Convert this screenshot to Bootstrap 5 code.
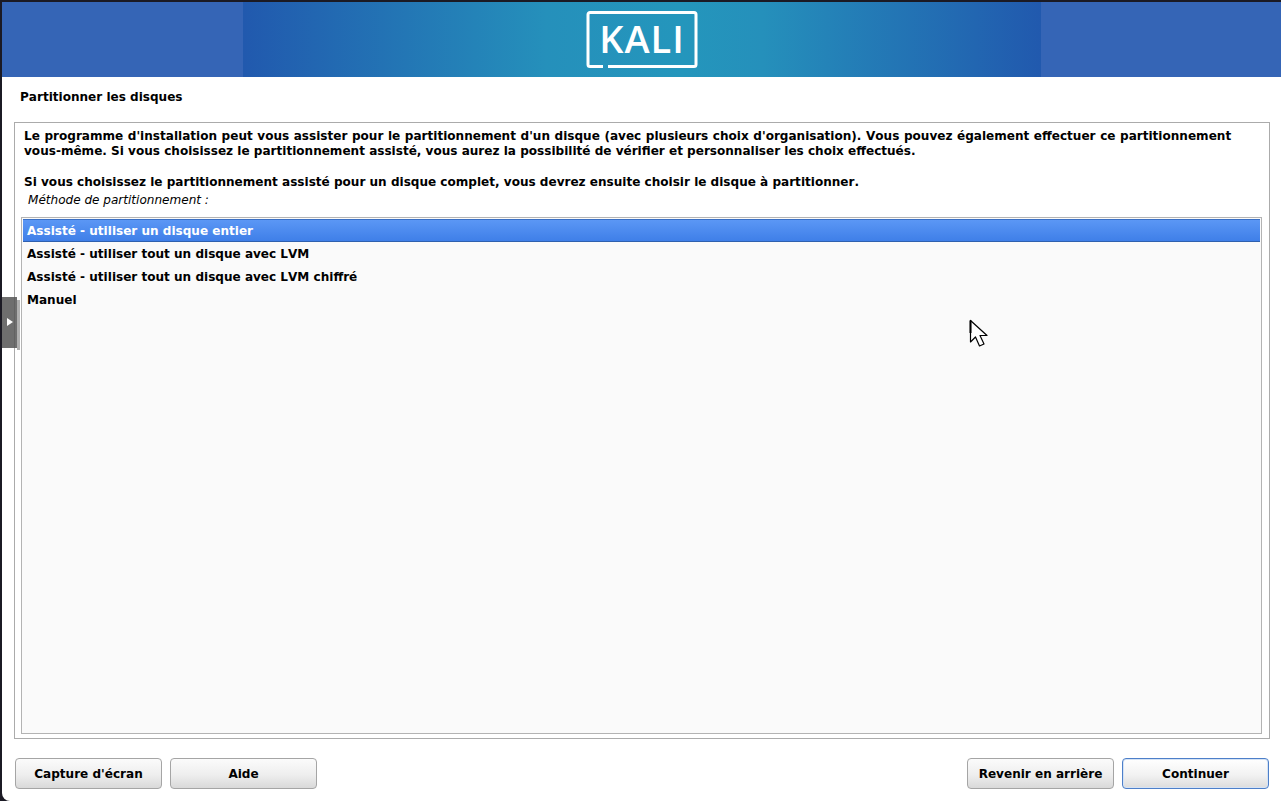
<!DOCTYPE html>
<html lang="fr">
<head>
    <meta charset="UTF-8">
    <meta name="viewport" content="width=device-width, initial-scale=1.0">
    <title>Partitionner les disques</title>
    <link href="https://cdn.jsdelivr.net/npm/bootstrap@5.3.2/dist/css/bootstrap.min.css" rel="stylesheet">
    <style>
        html, body {
            height: 801px;
            overflow: hidden;
            background-color: #1b1a24;
        }
        body {
            font-family: "DejaVu Sans", sans-serif;
            font-size: 12.05px;
            font-kerning: none;
            line-height: 15px;
            font-weight: 700;
            color: #000;
            padding: 2px 0 0 2px;
        }
        .inst-win {
            height: 799px;
            background-color: #fff;
            border-bottom-left-radius: 8px;
            position: relative;
        }
        .inst-banner {
            height: 75px;
            background-color: #3565b6;
        }
        .inst-banner-mid {
            width: 798px;
            margin-left: 241px;
            background: linear-gradient(90deg, #2159ae 0%, #2590bb 38%, #2496bc 55%, #2590bb 65%, #2159ae 100%);
        }
        .inst-title {
            padding: 13px 0 0 18px;
            height: 45px;
        }
        .inst-frame {
            margin: 0 11px 0 12px;
            height: 617px;
            border: 1px solid #ababab;
            padding: 6px 7px 4px 6px;
        }
        .inst-desc {
            padding: 0 0 0 3px;
            line-height: 15px;
            margin: 0;
        }
        .inst-wide {
            word-spacing: .38px;
        }
        .inst-label {
            font-weight: 400;
            font-style: italic;
            padding: 3px 0 0 7px;
            height: 27px;
        }
        .inst-list {
            height: 517px;
            border: 1px solid #b3b3b3;
            background-color: #fafafa;
            padding: 1px;
        }
        .inst-row {
            height: 23px;
            line-height: 24px;
            padding-left: 4px;
        }
        .inst-row-sel {
            color: #fff;
            background: linear-gradient(180deg, #5b97f5 0%, #3f7fe8 100%);
            border-top: 1px solid #3a6fc4;
            border-bottom: 1px solid #2f60ae;
            line-height: 23px;
        }
        .inst-foot {
            padding: 19px 12px 0 13px;
        }
        .inst-btn {
            width: 147px;
            height: 31px;
            padding: 1px 0 0;
            font-family: inherit;
            font-size: 12.05px;
            font-kerning: none;
            font-weight: 700;
            color: #000;
            border: 1px solid #a5a5a5;
            border-radius: 4px;
            background: linear-gradient(180deg, #fbfbfb 0%, #eeeeee 55%, #d9d9d9 100%);
        }
        .inst-btn-main {
            border: 1px solid #4d7fc9;
            box-shadow: inset 0 0 0 1px #d5e3f5;
            background: linear-gradient(180deg, #ffffff 0%, #f2f2f2 55%, #dcdcdc 100%);
        }
        .inst-handle {
            position: absolute;
            left: 0;
            top: 295px;
            width: 15px;
            height: 51px;
            background-color: rgba(85, 85, 85, .85);
        }
        .inst-handle::after {
            content: "";
            position: absolute;
            left: 15px;
            top: 3px;
            width: 3px;
            height: 50px;
            background-color: rgba(120, 120, 120, .6);
        }
        .inst-handle i {
            position: absolute;
            left: 5px;
            top: 21px;
            border-left: 6px solid #fff;
            border-top: 4px solid transparent;
            border-bottom: 4px solid transparent;
        }
        .inst-cursor {
            position: absolute;
            left: 967px;
            top: 317px;
        }
    </style>
</head>
<body>
<div class="inst-win d-flex flex-column">
    <div class="inst-banner d-flex flex-shrink-0">
        <div class="inst-banner-mid d-flex justify-content-center align-items-center">
            <svg width="114" height="59" viewBox="0 0 114 59">
                <path d="M18 56.500H5a2 2 0 0 1-2-2V4.500a2 2 0 0 1 2-2h104a2 2 0 0 1 2 2v50a2 2 0 0 1-2 2H23" fill="none" stroke="#fff" stroke-width="3"/>
                <text x="57" y="43" text-anchor="middle" fill="#fff" font-family="Open Sans, sans-serif" font-size="38" font-weight="600" letter-spacing="1">KALI</text>
            </svg>
        </div>
    </div>
    <div class="inst-title">Partitionner les disques</div>
    <div class="inst-frame d-flex flex-column">
        <p class="inst-desc"><span class="inst-wide">Le programme d'installation peut vous assister pour le partitionnement d'un disque (avec plusieurs choix d'organisation). Vous pouvez également effectuer ce partitionnement</span> <span class="text-nowrap">vous-même.</span> Si vous choisissez le partitionnement assisté, vous aurez la possibilité de vérifier et personnaliser les choix effectués.</p>
        <p class="inst-desc mt-3 pt-0">Si vous choisissez le partitionnement assisté pour un disque complet, vous devrez ensuite choisir le disque à partitionner.</p>
        <div class="inst-label">Méthode de partitionnement :</div>
        <div class="inst-list">
            <div class="inst-row inst-row-sel">Assisté - utiliser un disque entier</div>
            <div class="inst-row">Assisté - utiliser tout un disque avec LVM</div>
            <div class="inst-row">Assisté - utiliser tout un disque avec LVM chiffré</div>
            <div class="inst-row">Manuel</div>
        </div>
    </div>
    <div class="inst-foot d-flex gap-2">
        <button type="button" class="btn inst-btn">Capture d'écran</button>
        <button type="button" class="btn inst-btn">Aide</button>
        <button type="button" class="btn inst-btn ms-auto">Revenir en arrière</button>
        <button type="button" class="btn inst-btn inst-btn-main">Continuer</button>
    </div>
    <div class="inst-handle"><i></i></div>
    <svg class="inst-cursor" width="22" height="30" viewBox="0 0 22 30">
        <path d="M1.5 1.5V23l5-5 4 9 4.500-2-4-8.500H18z" fill="#fff" stroke="#000" stroke-width="1.200" stroke-linejoin="round"/>
        <path d="M1.500 1.500V14" fill="none" stroke="#000" stroke-width="2"/>
    </svg>
</div>
<script src="https://cdn.jsdelivr.net/npm/bootstrap@5.3.2/dist/js/bootstrap.bundle.min.js"></script>
</body>
</html>
